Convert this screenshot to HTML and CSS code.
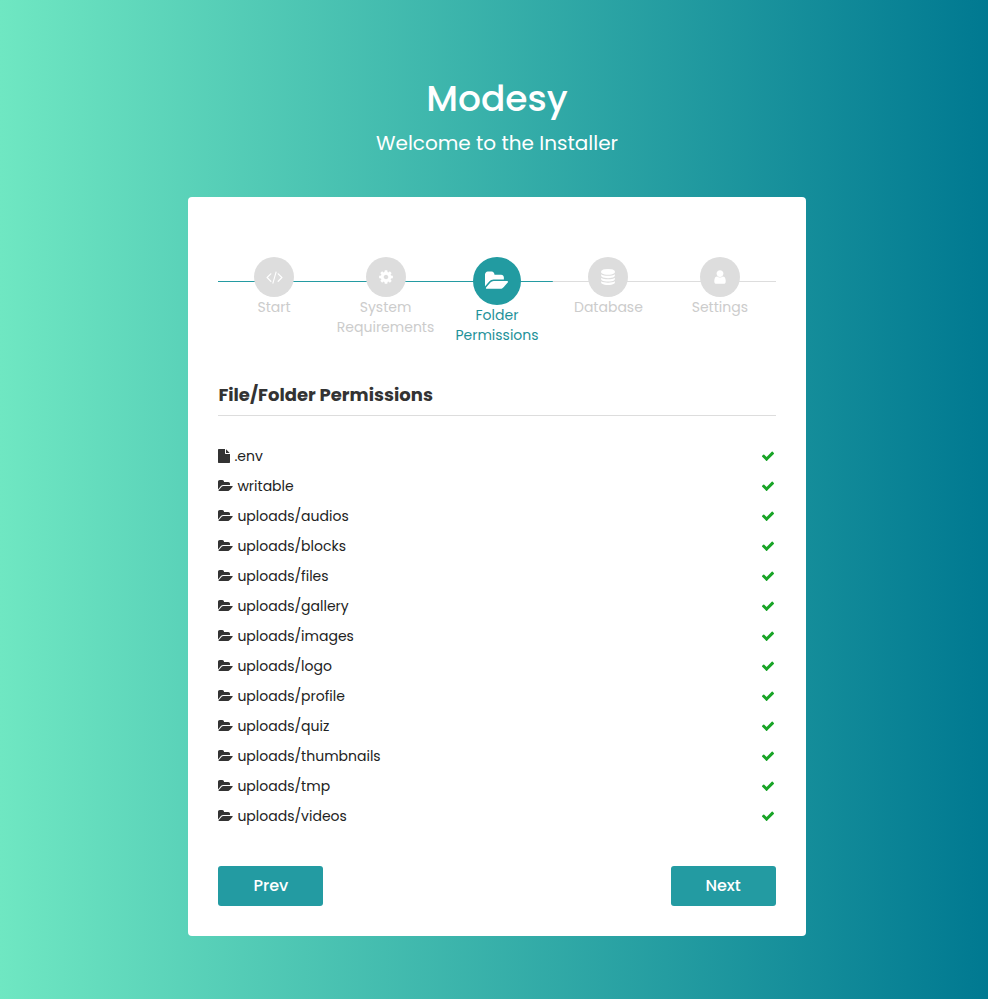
FILE: index.html
```html
<!DOCTYPE html>
<html lang="en">
<head>
<meta charset="utf-8">
<title>Modesy - Installer</title>
<link rel="stylesheet" href="styles.css">
</head>
<body>
<svg class="sprite" aria-hidden="true">
  <symbol id="folder" viewBox="64 0 1920 1792"><path d="M1943 952q0 31-31 66l-336 396q-43 51-120.500 86.500t-143.500 35.500h-1088q-34 0-60.500-13t-26.500-43q0-31 31-66l336-396q43-51 120.500-86.500t143.500-35.500h1088q34 0 60.500 13t26.500 43zm-343-344v160h-832q-94 0-197 47.500t-164 119.500l-337 396-5 6q0-4-.5-12.500t-.5-12.500v-960q0-92 66-158t158-66h320q92 0 158 66t66 158v32h544q92 0 158 66t66 158z"/></symbol>
  <symbol id="check" viewBox="0 0 1792 1792"><path d="M1671 566q0 40-28 68l-724 724-136 136q-28 28-68 28t-68-28l-136-136-362-362q-28-28-28-68t28-68l136-136q28-28 68-28t68 28l294 295 656-657q28-28 68-28t68 28l136 136q28 28 28 68z"/></symbol>
  <symbol id="file" viewBox="128 0 1536 1792"><path d="M1152 512v-472q22 14 36 28l408 408q14 14 28 36h-472zm-128 32q0 40 28 68t68 28h544v1056q0 40-28 68t-68 28h-1344q-40 0-68-28t-28-68v-1600q0-40 28-68t68-28h800v544z"/></symbol>
  <symbol id="code" viewBox="64 0 1920 1792"><path d="M681 1399l-50 50q-10 10-23 10t-23-10l-466-466q-10-10-10-23t10-23l466-466q10-10 23-10t23 10l50 50q10 10 10 23t-10 23l-393 393 393 393q10 10 10 23t-10 23zm591-1067l-373 1291q-4 13-15.500 19.500t-23.500 2.500l-62-17q-13-4-19.500-15.500t-2.500-24.500l373-1291q4-13 15.500-19.500t23.500-2.500l62 17q13 4 19.500 15.500t2.500 24.500zm657 651l-466 466q-10 10-23 10t-23-10l-50-50q-10-10-10-23t10-23l393-393-393-393q-10-10-10-23t10-23l50-50q10-10 23-10t23 10l466 466q10 10 10 23t-10 23z"/></symbol>
  <symbol id="cog" viewBox="0 0 1792 1792"><path d="M1152 896q0-106-75-181t-181-75-181 75-75 181 75 181 181 75 181-75 75-181zm512-109v222q0 12-8 23t-20 13l-185 28q-19 54-39 91 35 50 107 138 10 12 10 25t-9 23q-27 37-99 108t-94 71q-12 0-26-9l-138-108q-44 23-91 38-16 136-29 186-7 28-36 28h-222q-14 0-24.500-8.500t-11.500-21.500l-28-184q-49-16-90-37l-141 107q-10 9-25 9-14 0-25-11-126-114-165-168-7-10-7-23 0-12 8-23 15-21 51-66.500t54-70.500q-27-50-41-99l-183-27q-13-2-21-12.500t-8-23.500v-222q0-12 8-23t19-13l186-28q14-46 39-92-40-57-107-138-10-12-10-24 0-10 9-23 26-36 98.500-107.500t94.500-71.500q13 0 26 10l138 107q44-23 91-38 16-136 29-186 7-28 36-28h222q14 0 24.500 8.500t11.500 21.500l28 184q49 16 90 37l142-107q9-9 24-9 13 0 25 10 129 119 165 170 7 8 7 22 0 12-8 23-15 21-51 66.500t-54 70.500q26 50 41 98l183 28q13 2 21 12.500t8 23.500z"/></symbol>
  <symbol id="database" viewBox="0 0 1792 1792"><path d="M896 768q237 0 443-43t325-127v170q0 69-103 128t-280 93.500-385 34.500-385-34.500-280-93.500-103-128v-170q119 84 325 127t443 43zm0 768q237 0 443-43t325-127v170q0 69-103 128t-280 93.500-385 34.500-385-34.500-280-93.500-103-128v-170q119 84 325 127t443 43zm0-384q237 0 443-43t325-127v170q0 69-103 128t-280 93.500-385 34.500-385-34.500-280-93.500-103-128v-170q119 84 325 127t443 43zm0-1152q208 0 385 34.500t280 93.500 103 128v128q0 69-103 128t-280 93.500-385 34.500-385-34.500-280-93.500-103-128v-128q0-69 103-128t280-93.500 385-34.500z"/></symbol>
  <symbol id="user" viewBox="0 0 1792 1792"><path d="M1536 1399q0 109-62.500 187t-150.500 78h-854q-88 0-150.500-78t-62.500-187q0-85 8.500-160.500t31.500-152 58.500-131 94-89 134.500-34.500q131 128 313 128t313-128q76 0 134.500 34.500t94 89 58.500 131 31.500 152 8.500 160.500zm-256-887q0 159-112.500 271.500t-271.500 112.500-271.500-112.500-112.500-271.500 112.500-271.500 271.500-112.500 271.500 112.500 112.500 271.500z"/></symbol>
</svg>
<main class="page">
  <header class="intro">
    <h1 class="title">Modesy</h1>
    <p class="subtitle">Welcome to the Installer</p>
  </header>
  <section class="card">
    <ol class="steps">
      <li class="step"><span class="dot"><svg class="wide"><use href="#code"/></svg></span><span class="label">Start</span></li>
      <li class="step"><span class="dot"><svg><use href="#cog"/></svg></span><span class="label">System<br>Requirements</span></li>
      <li class="step active"><span class="dot"><svg class="wide"><use href="#folder"/></svg></span><span class="label">Folder<br>Permissions</span></li>
      <li class="step"><span class="dot"><svg><use href="#database"/></svg></span><span class="label">Database</span></li>
      <li class="step"><span class="dot"><svg><use href="#user"/></svg></span><span class="label">Settings</span></li>
    </ol>
    <h2 class="heading">File/Folder Permissions</h2>
    <ul class="files">
      <li><svg class="doc"><use href="#file"/></svg><span>.env</span><svg class="ok"><use href="#check"/></svg></li>
      <li><svg><use href="#folder"/></svg><span>writable</span><svg class="ok"><use href="#check"/></svg></li>
      <li><svg><use href="#folder"/></svg><span>uploads/audios</span><svg class="ok"><use href="#check"/></svg></li>
      <li><svg><use href="#folder"/></svg><span>uploads/blocks</span><svg class="ok"><use href="#check"/></svg></li>
      <li><svg><use href="#folder"/></svg><span>uploads/files</span><svg class="ok"><use href="#check"/></svg></li>
      <li><svg><use href="#folder"/></svg><span>uploads/gallery</span><svg class="ok"><use href="#check"/></svg></li>
      <li><svg><use href="#folder"/></svg><span>uploads/images</span><svg class="ok"><use href="#check"/></svg></li>
      <li><svg><use href="#folder"/></svg><span>uploads/logo</span><svg class="ok"><use href="#check"/></svg></li>
      <li><svg><use href="#folder"/></svg><span>uploads/profile</span><svg class="ok"><use href="#check"/></svg></li>
      <li><svg><use href="#folder"/></svg><span>uploads/quiz</span><svg class="ok"><use href="#check"/></svg></li>
      <li><svg><use href="#folder"/></svg><span>uploads/thumbnails</span><svg class="ok"><use href="#check"/></svg></li>
      <li><svg><use href="#folder"/></svg><span>uploads/tmp</span><svg class="ok"><use href="#check"/></svg></li>
      <li><svg><use href="#folder"/></svg><span>uploads/videos</span><svg class="ok"><use href="#check"/></svg></li>
    </ul>
    <div class="actions">
      <button class="btn" type="button">Prev</button>
      <button class="btn" type="button">Next</button>
    </div>
  </section>
</main>
</body>
</html>
```
FILE: styles.css
```css
* { box-sizing: border-box; }
body {
  margin: 0;
  min-height: 999px;
  background: linear-gradient(to right, #6fe7c2, #007991);
  font-family: Poppins, Inter, "Open Sans", sans-serif;
  font-size: 14px;
  color: #222;
}
h1, h2, p, ul, ol { margin: 0; padding: 0; font-weight: inherit; }
ul, ol { list-style: none; }
svg { fill: currentColor; flex: none; display: block; }
.sprite { display: none; }
.page { width: 617.2px; margin-left: 188.4px; padding-top: 74px; }
.intro { text-align: center; color: #fff; height: 123px; }
.title { font-size: 36px; line-height: 50px; font-weight: 500; }
.subtitle { font-size: 20px; line-height: 28px; margin-top: 5px; }
.card {
  height: 739px;
  padding: 60px 30px 30px;
  background: #fff;
  border-radius: 4px;
  display: flex;
  flex-direction: column;
}
.steps {
  display: flex;
  height: 118px;
  background:
    linear-gradient(#249ba2, #249ba2) 0 24px / 60% 1px no-repeat,
    linear-gradient(#ddd, #ddd) 0 24px / 100% 1px no-repeat;
}
.step { flex: 1; display: flex; flex-direction: column; align-items: center; color: #ccc; }
.dot {
  width: 40px;
  height: 40px;
  border-radius: 50%;
  background: #ddd;
  color: #fff;
  display: flex;
  align-items: center;
  justify-content: center;
}
.dot svg { width: 16px; height: 16px; }
.dot .wide { width: 17px; }
.label { line-height: 20px; text-align: center; }
.active { color: #1e9199; }
.active .dot { width: 48px; height: 48px; background: #229ba1; }
.active .dot svg { width: 23.6px; height: 22px; }
.heading {
  height: 41px;
  line-height: 39px;
  border-bottom: 1px solid #ddd;
  font-size: 18px;
  font-weight: 700;
  color: #333;
}
.files { margin-top: 25px; }
.files li { display: flex; align-items: center; height: 30px; }
.files svg { width: 15px; height: 14px; margin-right: 4px; color: #333; }
.files .doc { width: 12px; }
.files .ok { width: 14px; margin: 0 0.3px 0 auto; color: #18a427; }
.actions { display: flex; justify-content: space-between; margin-top: auto; }
.btn {
  width: 105px;
  height: 40px;
  border: 0;
  border-radius: 3px;
  background: #239ba2;
  color: #fff;
  font: 500 16px/40px Poppins, Inter, "Open Sans", sans-serif;
  padding: 0;
}
```
